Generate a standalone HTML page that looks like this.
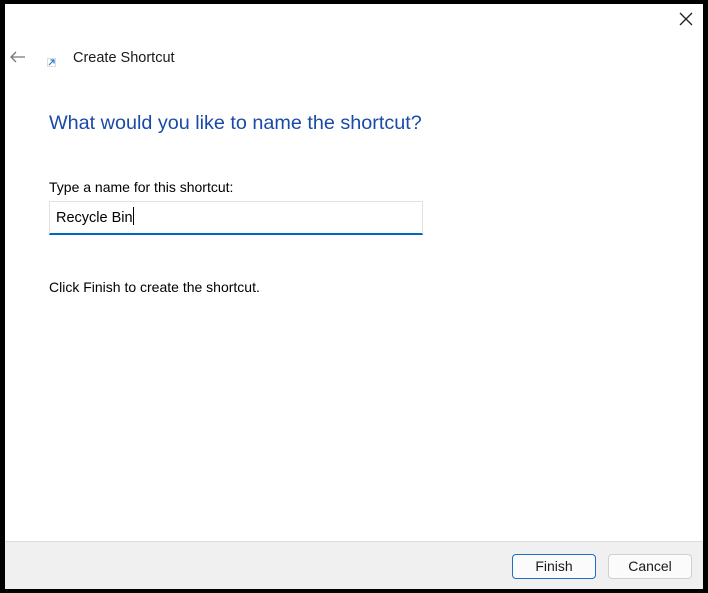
<!DOCTYPE html>
<html><head><meta charset="utf-8"><style>
html,body{margin:0;padding:0;}
body{width:708px;height:593px;background:#000;position:relative;overflow:hidden;font-family:"Segoe UI","Liberation Sans",sans-serif;}
.win{position:absolute;left:5px;top:4px;width:698px;height:584px;background:#fff;}
.foot{position:absolute;left:0;top:537px;width:698px;height:47px;background:#f0f0f0;border-top:1px solid #dcdcdc;}
.t{position:absolute;white-space:nowrap;color:#000;}
.btn{position:absolute;top:12px;height:25px;width:83px;box-sizing:border-box;border-radius:4px;background:#fbfbfb;font-size:14px;text-align:center;line-height:23px;color:#1a1a1a;}
</style></head><body>
<div class="win">
<svg style="position:absolute;left:674px;top:8px" width="14" height="14"><path d="M1 1L13 13M13 1L1 13" stroke="#222" stroke-width="1.3"/></svg>
<svg style="position:absolute;left:5px;top:47px" width="16" height="12"><path d="M1 6H15M6 1L1 6L6 11" stroke="#777" stroke-width="1.3" fill="none"/></svg>
<svg style="position:absolute;left:42px;top:54px" width="9" height="9"><rect x="0.5" y="0.5" width="8" height="8" fill="#fff" stroke="#ddd"/><path d="M2 7L7 2M3.5 2H7V5.5" stroke="#2a7bd0" stroke-width="1.2" fill="none"/></svg>
<div class="t" style="left:68px;top:46px;font-size:14.5px;color:#1a1a1a">Create Shortcut</div>
<div class="t" style="left:44px;top:108px;font-size:19.8px;color:#1a4aa8">What would you like to name the shortcut?</div>
<div class="t" style="left:44px;top:175px;font-size:14px">Type a name for this shortcut:</div>
<div style="position:absolute;left:44px;top:197px;width:374px;height:34px;box-sizing:border-box;border:1px solid #e2e2e2;border-bottom:2px solid #0067c0;"></div>
<div class="t" style="left:51px;top:203px;font-size:14.5px">Recycle Bin<span style="display:inline-block;width:1px;height:18px;background:#000;vertical-align:-3px"></span></div>
<div class="t" style="left:44px;top:275px;font-size:14px">Click Finish to create the shortcut.</div>
<div class="foot">
<div class="btn" style="left:507px;width:84px;border:1px solid #1e6fc4">Finish</div>
<div class="btn" style="left:603px;width:84px;border:1px solid #d0d0d0">Cancel</div>
</div>
</div>
</body></html>
